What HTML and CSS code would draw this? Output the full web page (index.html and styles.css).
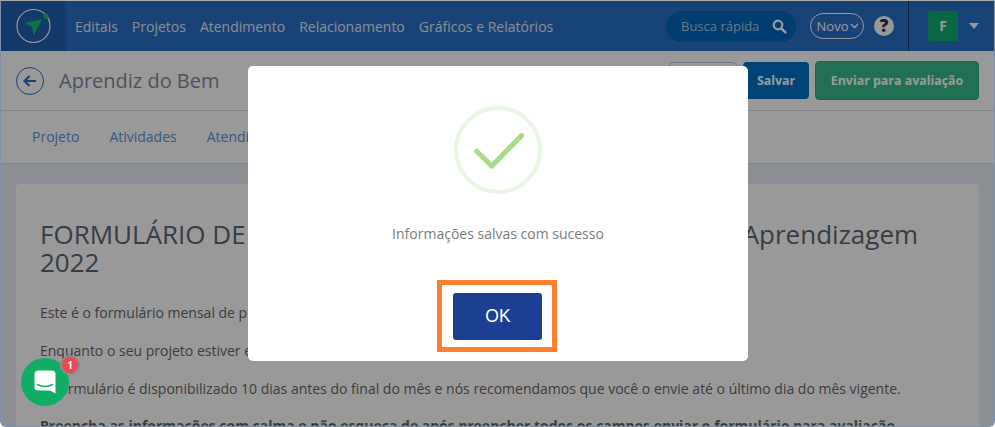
FILE: index.html
```html
<!DOCTYPE html>
<html lang="en">
<head>
  <meta charset="UTF-8">
  <title>Aprendiz do Bem</title>
  <link rel="stylesheet" href="styles.css">
</head>

<body>
  <div class="window">
    <header class="navbar">
      <div class="brand">
        <svg width="65" height="50" viewBox="0 0 65 50">
          <circle cx="32.5" cy="25" r="16.5" fill="none" stroke="#fff" stroke-width="1.2"/>
          <circle cx="45" cy="15" r="2.6" fill="#15c273"/>
          <path d="M24 22 L41 18.3 L32.5 34.5 L31 26 Z" fill="#15c273"/>
        </svg>
      </div>
      <nav class="menu">
        <a>Editais</a>
        <a>Projetos</a>
        <a>Atendimento</a>
        <a>Relacionamento</a>
        <a>Gráficos e Relatórios</a>
      </nav>
      <div class="search">
        <span>Busca rápida</span>
        <svg width="15" height="15" viewBox="0 0 15 15">
          <circle cx="6" cy="6" r="4.3" fill="none" stroke="#fff" stroke-width="2.2"/>
          <path d="M9.3 9.3 L13.4 13.4" stroke="#fff" stroke-width="2.6" stroke-linecap="round"/>
        </svg>
      </div>
      <div class="novo">
        <span>Novo</span>
        <svg width="9" height="6" viewBox="0 0 9 6"><path d="M1 1 L4.5 4.5 L8 1" fill="none" stroke="#fff" stroke-width="1.3"/></svg>
      </div>
      <div class="help">?</div>
      <div class="user">
        <div class="avatar">F</div>
        <div class="caret"></div>
      </div>
    </header>

    <section class="pagehead">
      <div class="back">
        <svg width="16" height="14" viewBox="0 0 16 14"><path d="M14 7 H3 M7.5 2 L2.5 7 L7.5 12" fill="none" stroke="#2c72c6" stroke-width="2.2"/></svg>
      </div>
      <h1>Aprendiz do Bem</h1>
      <div class="actions">
        <button class="btn-outline"></button>
        <button class="btn-save">Salvar</button>
        <button class="btn-send">Enviar para avaliação</button>
      </div>
    </section>

    <nav class="tabs">
      <a>Projeto</a>
      <a>Atividades</a>
      <a>Atendimento</a>
    </nav>

    <main class="content">
      <article class="card">
        <h2>FORMULÁRIO DE<span class="covered"></span>Aprendizagem 2022</h2>
        <p>Este é o formulário mensal de projetos</p>
        <p>Enquanto o seu projeto estiver em</p>
        <p>O formulário é disponibilizado 10 dias antes do final do mês e nós recomendamos que você o envie até o último dia do mês vigente.</p>
        <p><b>Preencha as informações com calma e não esqueça de após preencher todos os campos enviar o formulário para avaliação</b></p>
      </article>
    </main>

    <div class="overlay">
      <div class="modal">
        <div class="check">
          <svg width="52" height="40" viewBox="0 0 52 40"><path d="M4.7 21.2 L19.7 36 L49.7 5.5" fill="none" stroke="#a5dc86" stroke-width="5" stroke-linecap="round" stroke-linejoin="round"/></svg>
        </div>
        <p class="msg">Informações salvas com sucesso</p>
        <div class="highlight">
          <button class="ok">OK</button>
        </div>
      </div>
    </div>

    <div class="chat">
      <svg width="22" height="24" viewBox="0 0 22 24">
        <path d="M4 0.5 H18 Q21.5 0.5 21.5 4 V23.5 L16 20.5 H4 Q0.5 20.5 0.5 17 V4 Q0.5 0.5 4 0.5 Z" fill="#fff"/>
        <path d="M3.5 14.5 Q11 18.5 18.5 14.5" fill="none" stroke="#10ad65" stroke-width="1.5" stroke-linecap="round"/>
      </svg>
      <span class="badge">1</span>
    </div>
  </div>
</body>

</html>
```

FILE: styles.css
```css
* {
  box-sizing: border-box;
}

html, body {
  margin: 0;
  height: 100%;
  overflow: hidden;
}

body {
  font-family: "Open Sans", sans-serif;
  background: #fff;
}

.window {
  position: relative;
  height: 427px;
  overflow: hidden;
  display: flex;
  flex-direction: column;
  border: 1px solid #7f8fa8;
  border-top-color: #aaa;
  border-radius: 0 0 6px 6px;
  background: #e8eef5;
}

/* top bar */
.navbar {
  flex: none;
  height: 50px;
  display: flex;
  align-items: center;
  background: #2871c5;
  color: #fff;
}

.brand {
  width: 65px;
  height: 50px;
  background: #2161ad;
}

.brand svg {
  display: block;
}

.menu {
  display: flex;
  gap: 14px;
  margin-left: 9px;
  font-size: 14px;
  color: #e6ebf0;
  flex: 1;
}

.search {
  width: 130px;
  height: 31px;
  border-radius: 16px;
  background: #0066bb;
  display: flex;
  align-items: center;
  justify-content: space-between;
  padding: 0 9px 0 15px;
  font-size: 13px;
  color: #b4cbe2;
}

.novo {
  width: 54px;
  height: 26px;
  margin-left: 14px;
  border: 1px solid #fff;
  border-radius: 13px;
  display: flex;
  align-items: center;
  justify-content: center;
  gap: 2px;
  padding-left: 2px;
  font-size: 13px;
}

.help {
  width: 20px;
  height: 20px;
  margin-left: 10px;
  border-radius: 50%;
  background: #fff;
  color: #2a2f3a;
  font-weight: 800;
  font-size: 17px;
  line-height: 20px;
  text-align: center;
}

.user {
  height: 50px;
  width: 86px;
  margin-left: 14px;
  border-left: 1px solid #123a6b;
  display: flex;
  align-items: center;
  gap: 11px;
  padding-left: 19px;
}

.avatar {
  width: 30px;
  height: 30px;
  border-radius: 3px;
  background: #10ad70;
  font-size: 14px;
  font-weight: 700;
  line-height: 30px;
  text-align: center;
}

.caret {
  border-left: 5px solid transparent;
  border-right: 5px solid transparent;
  border-top: 6px solid #fff;
}

/* page title row */
.pagehead {
  flex: none;
  height: 60px;
  display: flex;
  align-items: center;
  padding: 0 15px;
  background: #fff;
  border-bottom: 1px solid #d5dfe6;
}

.back {
  width: 28px;
  height: 28px;
  border: 1px solid #2c72c6;
  border-radius: 50%;
  display: flex;
  align-items: center;
  justify-content: center;
}

.pagehead h1 {
  margin: 0 0 0 15px;
  font-size: 20px;
  font-weight: 400;
  color: #7f8a9c;
  flex: 1;
}

.actions {
  display: flex;
  align-items: center;
  gap: 6px;
}

.actions button {
  font-family: inherit;
  font-size: 12.4px;
  font-weight: 700;
  color: #fff;
  border-radius: 4px;
  border: 0;
}

.actions .btn-outline {
  width: 68px;
  height: 37px;
  background: #fff;
  border: 1px solid #b8c4d0;
}

.btn-save {
  width: 66px;
  height: 37px;
  background: #0072c6;
}

.actions .btn-send {
  width: 164px;
  height: 39px;
  background: #38bb8a;
  border: 1px solid #33aa80;
}

/* tabs */
.tabs {
  flex: none;
  height: 53px;
  display: flex;
  align-items: center;
  gap: 30px;
  padding: 0 0 2px 31px;
  background: #fff;
  border-bottom: 1px solid #d5dfe6;
  font-size: 14px;
  color: #5796de;
}

.content {
  padding: 20px 15px;
}

.card {
  background: #fff;
  border-radius: 4px;
  padding: 36px 24px;
  color: #666;
  font-size: 14px;
  height: 400px;
}

.card h2 {
  margin: 0 0 26px;
  font-size: 26px;
  font-weight: 400;
  line-height: 28px;
  color: #5d6674;
}

/* part of the title that the modal hides */
.covered {
  display: inline-block;
  width: 497px;
}

.card p {
  margin: 0 0 16.8px;
  line-height: 21px;
}

/* modal */
.overlay {
  position: absolute;
  inset: 0;
  background: rgba(0, 0, 0, 0.4);
}

.modal {
  position: absolute;
  left: 247px;
  top: 65px;
  width: 500px;
  height: 295px;
  background: #fff;
  border-radius: 5px;
  display: flex;
  flex-direction: column;
  align-items: center;
  padding-top: 40px;
}

.check {
  width: 88px;
  height: 88px;
  border: 4px solid #eaf6e4;
  border-radius: 50%;
  display: flex;
  align-items: center;
  justify-content: center;
}

.msg {
  margin: 30px 0 0;
  font-size: 14px;
  line-height: 20px;
  color: #7b7b7b;
}

.highlight {
  margin: 36px 2px 0 0;
  width: 120px;
  height: 72px;
  border: 5px solid #fe7f2d;
  display: flex;
  align-items: center;
  justify-content: center;
}

.ok {
  width: 89px;
  height: 47px;
  padding: 0 0 0 2px;
  background: #1c3f94;
  color: #fff;
  border: 0;
  border-radius: 3px;
  font-family: "Liberation Sans", sans-serif;
  font-size: 17.5px;
}

/* chat bubble */
.chat {
  position: absolute;
  left: 20px;
  top: 357px;
  width: 48px;
  height: 48px;
  border-radius: 50%;
  background: #10ad65;
  display: flex;
  align-items: center;
  justify-content: center;
}

.badge {
  position: absolute;
  left: 41px;
  top: -1px;
  width: 16px;
  height: 16px;
  border-radius: 50%;
  background: #f4444c;
  box-shadow: 0 0 0 2px #8c8c8c;
  color: #fff;
  font-size: 10px;
  font-weight: 700;
  line-height: 16px;
  text-align: center;
}
```
